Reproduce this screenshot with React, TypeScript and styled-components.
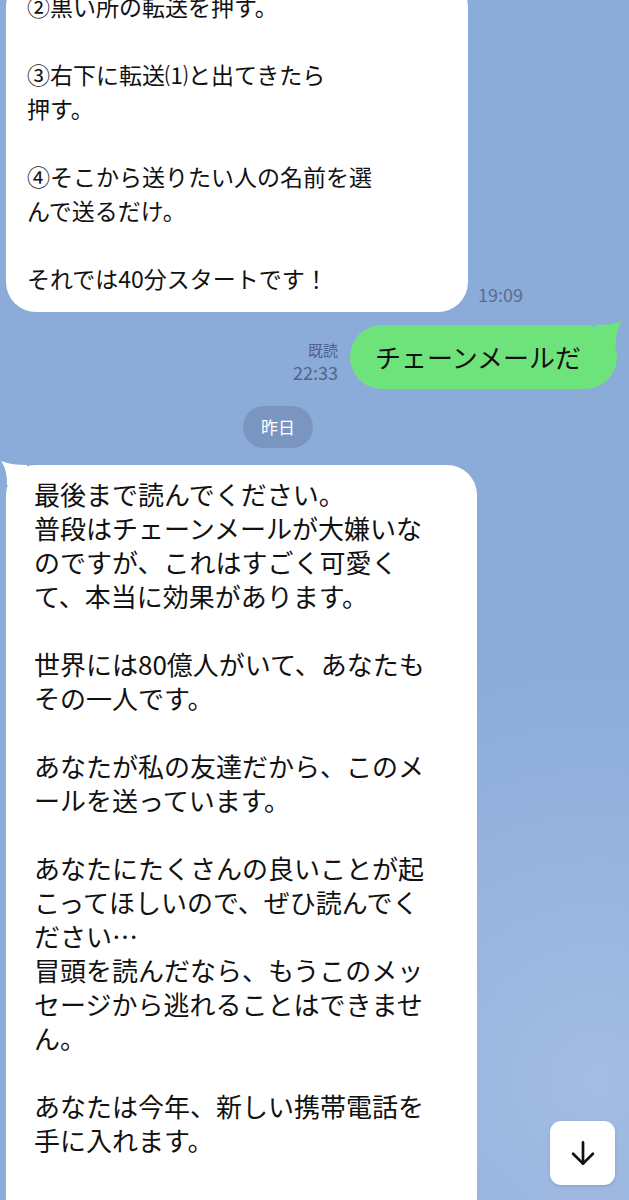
import React from 'react';
import styled, { createGlobalStyle } from 'styled-components';

const GlobalStyle = createGlobalStyle`
  html, body {
    margin: 0;
    padding: 0;
    height: 1200px;
    overflow: hidden;
  }
  body {
    font-family: "Noto Sans CJK JP", "Noto Sans", sans-serif;
    background: #8babd9;
  }
`;

const Screen = styled.div`
  width: 629px;
  height: 1200px;
  overflow: hidden;
  position: relative;
  background: radial-gradient(circle at 95% 90%, #a3bde3 0%, rgba(163, 189, 227, 0) 35%), #8babd9;
`;

const ChatList = styled.div`
  display: flex;
  flex-direction: column;
  margin-top: -23px;
`;

const IncomingRow = styled.div<{ $gap?: number }>`
  display: flex;
  align-items: flex-end;
  gap: 10px;
  padding-left: 6px;
  margin-top: ${(p) => p.$gap ?? 0}px;
`;

const OutgoingRow = styled.div<{ $gap?: number }>`
  display: flex;
  align-items: flex-end;
  justify-content: flex-end;
  gap: 12px;
  padding-right: 12px;
  margin-top: ${(p) => p.$gap ?? 0}px;
`;

const Bubble = styled.div<{ $width: number; $size: number; $padLeft: number; $padBottom: number }>`
  position: relative;
  box-sizing: border-box;
  width: ${(p) => p.$width}px;
  background: #ffffff;
  border-radius: 30px;
  padding: 12px 10px ${(p) => p.$padBottom}px ${(p) => p.$padLeft}px;
  font-size: ${(p) => p.$size}px;
  line-height: 34px;
  color: #111111;
  white-space: pre;
`;

const GreenBubble = styled.div`
  position: relative;
  height: 64px;
  width: 267px;
  box-sizing: border-box;
  padding: 0 30px 0 25px;
  background: #6fe37b;
  border-radius: 32px;
  font-size: 26px;
  line-height: 64px;
  color: #111111;
  white-space: nowrap;
`;

const Tail = styled.svg<{ $side: 'left' | 'right' }>`
  position: absolute;
  top: -4px;
  ${(p) => (p.$side === 'left' ? 'left: -5px;' : 'right: -5px;')}
  width: 26px;
  height: 24px;
`;

const TimeStamp = styled.div`
  font-size: 18px;
  line-height: 22px;
  color: #5b6d8e;
  margin-bottom: 7px;
`;

const Meta = styled.div`
  display: flex;
  flex-direction: column;
  align-items: flex-end;
  margin-bottom: 5px;
  color: #52648a;
`;

const ReadMark = styled.div`
  font-size: 15px;
  line-height: 20px;
`;

const MetaTime = styled.div`
  font-size: 18px;
  line-height: 24px;
`;

const DateRow = styled.div`
  display: flex;
  margin-top: 17px;
  padding-left: 243px;
`;

const DatePill = styled.div`
  width: 70px;
  height: 42px;
  border-radius: 21px;
  background: #7b95c1;
  color: #ffffff;
  font-size: 17px;
  line-height: 42px;
  text-align: center;
`;

const ScrollButton = styled.button`
  position: absolute;
  right: 14px;
  bottom: 15px;
  width: 65px;
  height: 64px;
  border: 0;
  border-radius: 11px;
  background: #ffffff;
  display: flex;
  align-items: center;
  justify-content: center;
  padding: 0;
  box-shadow: 0 1px 3px rgba(60, 80, 120, 0.25);
`;

const firstText = `②黒い所の転送を押す。

③右下に転送⑴と出てきたら
押す。

④そこから送りたい人の名前を選
んで送るだけ。

それでは40分スタートです！`;

const secondText = `最後まで読んでください。
普段はチェーンメールが大嫌いな
のですが、これはすごく可愛く
て、本当に効果があります。

世界には80億人がいて、あなたも
その一人です。

あなたが私の友達だから、このメ
ールを送っています。

あなたにたくさんの良いことが起
こってほしいので、ぜひ読んでく
ださい…
冒頭を読んだなら、もうこのメッ
セージから逃れることはできませ
ん。

あなたは今年、新しい携帯電話を
手に入れます。`;

const App = () => {
  return (
    <Screen>
      <GlobalStyle />
      <ChatList>
        <IncomingRow>
          <Bubble $width={462} $size={23} $padLeft={21} $padBottom={17}>
            {firstText}
          </Bubble>
          <TimeStamp>19:09</TimeStamp>
        </IncomingRow>

        <OutgoingRow $gap={13}>
          <Meta>
            <ReadMark>既読</ReadMark>
            <MetaTime>22:33</MetaTime>
          </Meta>
          <GreenBubble>
            <Tail $side="right" viewBox="0 0 26 24">
              <path d="M0 4 C10 4 18 3 26 0 C22 6 20 12 20 24 L0 24 Z" fill="#6fe37b" />
            </Tail>
            チェーンメールだ
          </GreenBubble>
        </OutgoingRow>

        <DateRow>
          <DatePill>昨日</DatePill>
        </DateRow>

        <IncomingRow $gap={17}>
          <Bubble $width={471} $size={26} $padLeft={28} $padBottom={80}>
            <Tail $side="left" viewBox="0 0 26 24">
              <path d="M26 4 C16 4 8 3 0 0 C4 6 6 12 6 24 L26 24 Z" fill="#ffffff" />
            </Tail>
            {secondText}
          </Bubble>
        </IncomingRow>
      </ChatList>

      <ScrollButton aria-label="scroll down">
        <svg width="34" height="34" viewBox="0 0 24 24" fill="none" stroke="#111" strokeWidth="1.9" strokeLinecap="round" strokeLinejoin="round">
          <path d="M12 4.5v15" />
          <path d="M19 12.5l-7 7-7-7" />
        </svg>
      </ScrollButton>
    </Screen>
  );
};

export default App;
